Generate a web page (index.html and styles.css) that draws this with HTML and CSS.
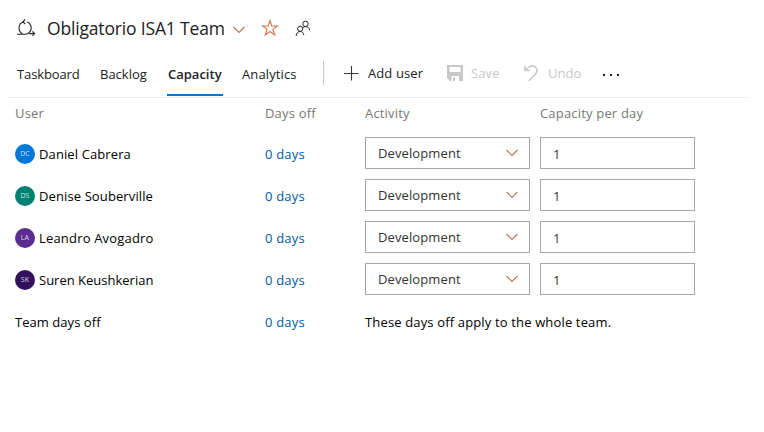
FILE: index.html
```html
<!DOCTYPE html>
<html lang="en">
<head>
<meta charset="utf-8">
<title>Capacity</title>
<link rel="stylesheet" href="styles.css">
</head>
<body>
<header class="header">
  <svg class="sprint" width="20" height="20" viewBox="0 0 20 20"><path d="M1 16.3H9C12.5 16.3 15.2 13.5 15.2 10C15.2 7.2 13.4 4.8 11 4M6.3 15.8C4.4 14.7 3 12.5 3 10C3 6.8 5.2 4.2 8.2 3.7M9.2 1.4L7 3.8L9.2 6M13.2 15.6H18.2M16.4 13.4L18.6 15.6L16.4 17.8"/></svg>
  <h1 class="title">Obligatorio ISA1 Team</h1>
  <svg class="chevron title-chevron" width="12" height="8" viewBox="0 0 12 8"><path d="M.5 1L6 6.5L11.5 1"/></svg>
  <svg class="star" width="18" height="18" viewBox="0 0 18 18"><path d="M9 1.6L10.8 7H16.5L11.9 10.4L13.7 15.9L9 12.5L4.3 15.9L6.1 10.4L1.5 7H7.2Z"/></svg>
  <svg class="people" width="16" height="17" viewBox="0 0 16 17"><circle cx="5.2" cy="8.8" r="2.6"/><circle cx="10.5" cy="3.8" r="2.7"/><path d="M1.2 16C1.2 13.3 2.8 11.5 5.2 11.5C7.3 11.5 8.5 13 8.8 15M8 7.6C8.7 6.9 9.6 6.6 10.5 6.6C12.8 6.6 14.4 7.9 14.7 10.2"/></svg>
</header>
<div class="bar">
  <nav class="tabs">
    <a class="tab taskboard"><span>Taskboard</span></a>
    <a class="tab backlog"><span>Backlog</span></a>
    <a class="tab active"><span>Capacity</span></a>
    <a class="tab analytics"><span>Analytics</span></a>
  </nav>
  <div class="divider"></div>
  <div class="command add"><svg width="16" height="16" viewBox="0 0 16 16"><path d="M8.5 1V15.5M1 8.5H15.5"/></svg><span>Add user</span></div>
  <div class="command save disabled"><svg width="16" height="16" viewBox="0 0 16 16"><path fill-rule="evenodd" d="M0 0H16V16H3L0 13ZM2.5 2V7H13.5V2ZM4.5 11V16H6V12.5H8V16H12V11Z"/></svg><span>Save</span></div>
  <div class="command undo disabled"><svg width="14" height="17" viewBox="0 0 14 17"><path d="M1 .5V5.5H6M1.2 5.3L4.5 2.5C7 .3 10 .4 11.7 2.4C13.5 4.5 13.1 7.2 11.3 9.2L4.8 16"/></svg><span>Undo</span></div>
  <svg class="more" width="18" height="4" viewBox="0 0 18 4"><path d="M1 1h2v2H1zM8 1h2v2H8zM15 1h2v2h-2z"/></svg>
</div>
<main class="grid">
  <div class="row head"><span>User</span><span>Days off</span><span>Activity</span><span class="cap">Capacity per day</span></div>
  <div class="row"><div class="user"><i class="avatar blue">DC</i><span>Daniel Cabrera</span></div><a class="days">0 days</a><div class="field select"><span>Development</span><svg class="chevron" width="12" height="8" viewBox="0 0 12 8"><path d="M.5 1L6 6.5L11.5 1"/></svg></div><div class="field input">1</div></div>
  <div class="row"><div class="user"><i class="avatar green">DS</i><span>Denise Souberville</span></div><a class="days">0 days</a><div class="field select"><span>Development</span><svg class="chevron" width="12" height="8" viewBox="0 0 12 8"><path d="M.5 1L6 6.5L11.5 1"/></svg></div><div class="field input">1</div></div>
  <div class="row"><div class="user"><i class="avatar purple">LA</i><span class="wide">Leandro Avogadro</span></div><a class="days">0 days</a><div class="field select"><span>Development</span><svg class="chevron" width="12" height="8" viewBox="0 0 12 8"><path d="M.5 1L6 6.5L11.5 1"/></svg></div><div class="field input">1</div></div>
  <div class="row"><div class="user"><i class="avatar dark">SK</i><span class="tight">Suren Keushkerian</span></div><a class="days">0 days</a><div class="field select"><span>Development</span><svg class="chevron" width="12" height="8" viewBox="0 0 12 8"><path d="M.5 1L6 6.5L11.5 1"/></svg></div><div class="field input">1</div></div>
  <div class="row team"><span class="team-label">Team days off</span><a class="days">0 days</a><span class="note">These days off apply to the whole team.</span></div>
</main>
</body>
</html>
```
FILE: styles.css
```css
* { box-sizing: border-box; }
body { margin: 0; background: #fff; color: #000; font: 13px/20px "Open Sans", "Noto Sans", sans-serif; white-space: nowrap; }
svg { display: block; flex: none; fill: none; stroke: #222; stroke-width: 1.1; }
.header { display: flex; align-items: center; height: 56px; padding-left: 16px; }
.title { margin: 0 0 0 11px; width: 178px; font-size: 17.5px; letter-spacing: -.17px; line-height: 24px; font-weight: 400; color: #222; }
.chevron { stroke: #b5795c; stroke-width: 1.1; }
.title-chevron { margin: 4px 0 0 8px; }
.star { margin-left: 16px; stroke: #cf7446; stroke-width: 1.1; }
.people { margin-left: 16px; stroke-width: 1; }
.bar { display: flex; align-items: center; height: 42px; margin: 0 17px 0 7px; border-bottom: 1px solid #eaeaea; }
.tabs { display: flex; height: 41px; align-self: flex-start; padding-left: 10px; }
.tab { height: 40px; line-height: 37px; margin-right: 20px; color: #222; }
.taskboard { width: 63px; letter-spacing: -.12px; }
.backlog { width: 47px; }
.active { width: 56px; padding-left: 1px; font-weight: 600; border-bottom: 2px solid #0078d4; }
.analytics { width: 55px; margin-left: -1px; letter-spacing: .12px; }
.divider { width: 1px; height: 24px; margin: -8px 0 0 6px; background: #c8c8c8; }
.command { display: flex; align-items: center; height: 20px; margin-top: -7px; color: #222; }
.add { margin-left: 19px; width: 104px; letter-spacing: .1px; }
.add span { margin-left: 9px; }
.add svg { stroke: #3a3a3a; }
.save { width: 77px; }
.save svg { fill: #c8c8c8; stroke: none; }
.save span { margin-left: 8px; letter-spacing: .1px; }
.undo { width: 78px; }
.undo svg { stroke: #c8c8c8; stroke-width: 1.6; }
.undo span { margin-left: 10px; }
.disabled { color: #c8c8c8; }
.more { fill: #222; stroke: none; margin-top: -3px; }
.grid { padding-left: 15px; letter-spacing: .11px; }
.row { display: grid; grid-template-columns: 250px 100px 175px 155px; align-items: center; height: 42px; }
.row.head { height: 34px; padding-bottom: 4px; color: #777; letter-spacing: .18px; }
.user { display: flex; align-items: center; gap: 4px; padding-top: 2px; }
.wide { letter-spacing: .18px; }
.tight { letter-spacing: 0; }
.avatar { width: 20px; height: 20px; border-radius: 50%; color: #ffffffd0; font-size: 7px; font-style: normal; text-align: center; }
.blue { background: #0078d7; }
.green { background: #008272; }
.purple { background: #5c2d91; }
.dark { background: #32105c; }
.days { color: #005a9e; padding-top: 2px; letter-spacing: .2px; }
.field { height: 32px; border: 1px solid #a6a6a6; color: #333; padding-left: 12px; }
.select { display: flex; align-items: center; width: 165px; }
.select .chevron { margin-left: auto; margin-right: 11px; }
.input { width: 155px; line-height: 32px; }
.team-label, .note { padding-top: 2px; }
.team-label { letter-spacing: .05px; }
.note { letter-spacing: .15px; }
```
